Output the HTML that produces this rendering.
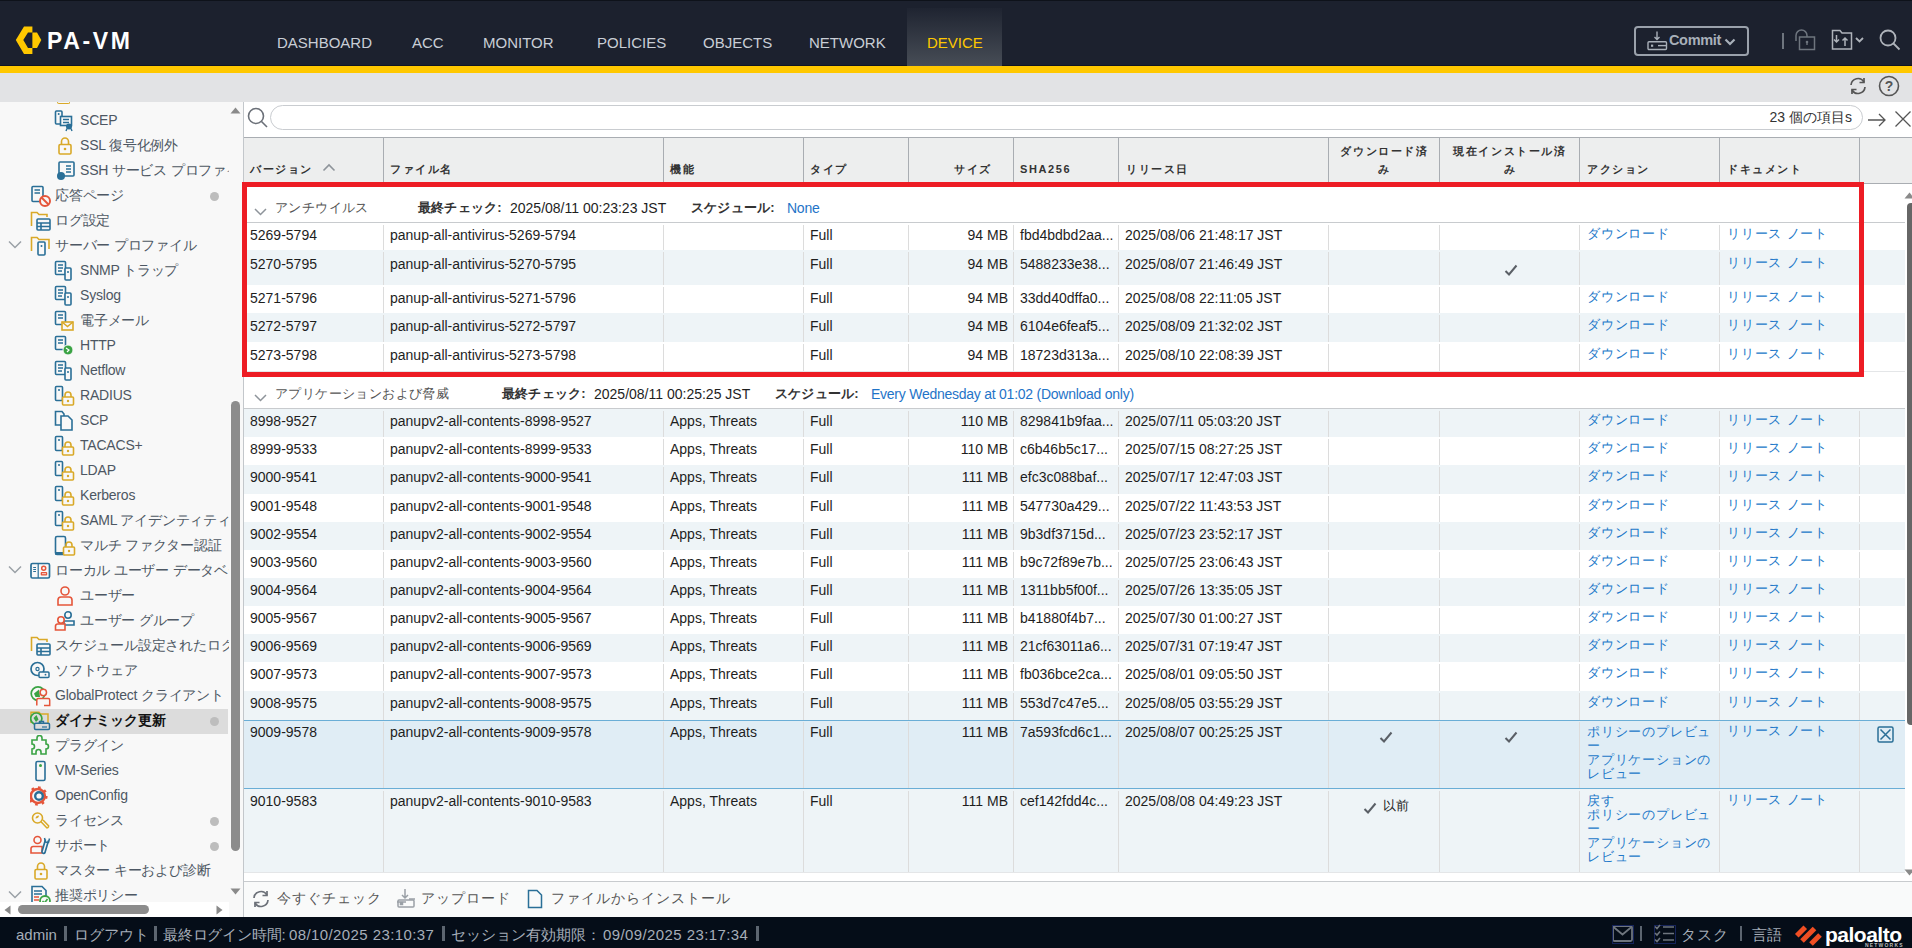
<!DOCTYPE html><html><head><meta charset="utf-8"><title>PA-VM</title><style>
*{box-sizing:border-box;margin:0;padding:0}
html,body{width:1912px;height:948px;overflow:hidden;background:#fff;font-family:"Liberation Sans",sans-serif;position:relative}
.abs{position:absolute}
.t{position:absolute;white-space:nowrap;line-height:1}
#nav{position:absolute;left:0;top:0;width:1912px;height:66px;background:#1c212e;border-top:1px solid #0e121a;border-bottom:1px solid #111622}
.nv{position:absolute;top:35px;font-size:15px;color:#c9d0d8;letter-spacing:0px;line-height:15px;white-space:nowrap}
#ystripe{position:absolute;left:0;top:66px;width:1912px;height:7px;background:#ffc800}
#gbar{position:absolute;left:0;top:73px;width:1912px;height:29px;background:#e2e3e5}
#side{position:absolute;left:0;top:102px;width:243px;height:815px;background:#f8f8f8;overflow:hidden}
.si{position:absolute;height:25px;line-height:25px;font-size:14px;color:#4d5763;white-space:nowrap;letter-spacing:-0.2px}
.dot{position:absolute;width:9px;height:9px;border-radius:50%;background:#bdbdbd}
#main{position:absolute;left:243px;top:102px;width:1669px;height:815px;background:#fff;border-left:1px solid #c3c7cb}
.hd{position:absolute;font-size:11px;font-weight:bold;color:#333;letter-spacing:1.6px;white-space:nowrap;line-height:13px}
.row{position:absolute;left:244px;width:1661px}
.c{position:absolute;font-size:14px;color:#1e1e1e;white-space:nowrap;line-height:16px}
.lk{position:absolute;font-size:13px;color:#2278c9;white-space:nowrap;line-height:14px;letter-spacing:0.8px}
.vl{position:absolute;width:1px;background:#dcdcdc}
#status{position:absolute;left:0;top:917px;width:1912px;height:31px;background:#050d18}
.st{position:absolute;top:926px;font-size:15px;color:#a6aeb9;white-space:nowrap;line-height:18px}
.sep{position:absolute;width:3px;height:15px;background:#5c6570}
</style></head><body>
<div id="nav"></div>
<svg class="abs" style="left:15px;top:25px" width="28" height="30" viewBox="0 0 28 30">
<path d="M9 1.5 L17.4 1.5 L17.4 7.6 L13 7.6 L8.3 15 L13 22.9 L17.4 22.9 L17.4 29 L9 29 L0.8 15 Z" fill="#ffc800"/>
<path d="M17.4 7.6 L22 7.6 L26.3 15 L22 22.9 L17.4 22.9 Z" fill="#ffc800"/>
</svg>
<div class="t" style="left:47px;top:30px;font-size:23px;font-weight:bold;color:#fff;letter-spacing:2.6px;line-height:22px">PA-VM</div>
<div class="abs" style="left:907px;top:8px;width:95px;height:58px;background:linear-gradient(#1f2431,#474d56)"></div>
<div class="nv" style="left:277px;color:#c9ced6">DASHBOARD</div>
<div class="nv" style="left:412px;color:#c9ced6">ACC</div>
<div class="nv" style="left:483px;color:#c9ced6">MONITOR</div>
<div class="nv" style="left:597px;color:#c9ced6">POLICIES</div>
<div class="nv" style="left:703px;color:#c9ced6">OBJECTS</div>
<div class="nv" style="left:809px;color:#c9ced6">NETWORK</div>
<div class="nv" style="left:927px;color:#ffc800">DEVICE</div>
<div class="abs" style="left:1634px;top:26px;width:115px;height:30px;border:2px solid #9aa1ab;border-radius:4px"></div>
<svg class="abs" style="left:1646px;top:30px" width="22" height="22" viewBox="0 0 22 22" fill="none" stroke="#a9b0b9" stroke-width="1.4">
<path d="M11 1.5V9.5M8.5 7L11 9.5L13.5 7"/><rect x="2" y="11.7" width="18.5" height="7.8" rx="1"/><path d="M12 15.6H20.5"/><rect x="5" y="14.6" width="2.2" height="2.2" fill="#a9b0b9" stroke="none"/></svg>
<div class="t" style="left:1669px;top:32px;font-size:14.5px;font-weight:bold;color:#a8b0b9;letter-spacing:-0.35px;line-height:16px">Commit</div>
<svg class="abs" style="left:1724px;top:38px" width="12" height="8" viewBox="0 0 12 8"><path d="M1.5 1.5L6 6L10.5 1.5" stroke="#a8b0b9" stroke-width="2.2" fill="none"/></svg>
<div class="abs" style="left:1782px;top:33px;width:2px;height:16px;background:#6e757e"></div>
<svg class="abs" style="left:1794px;top:29px" width="22" height="22" viewBox="0 0 22 22" fill="none" stroke="#6e757e" stroke-width="1.5">
<path d="M2 12V6.5A5.5 5.5 0 0 1 13 6.5V8"/><rect x="5.5" y="8" width="15" height="12.5"/><circle cx="13" cy="13" r="1.3" fill="#6e757e" stroke="none"/><path d="M13 13V16" stroke-width="1.4"/></svg>
<svg class="abs" style="left:1831px;top:29px" width="34" height="22" viewBox="0 0 34 22" fill="none" stroke="#aeb3ba" stroke-width="1.5">
<path d="M1.5 20 V1.5 H9 L11 4 H20.5 V20 Z"/><path d="M5.5 6 V13 M3 10.5 L5.5 13 L8 10.5 M14 17 V9 M11.5 11.5 L14 9 L16.5 11.5"/><path d="M25 9 L28.5 12.5 L32 9" stroke-width="1.8"/></svg>
<svg class="abs" style="left:1879px;top:29px" width="22" height="22" viewBox="0 0 22 22" fill="none" stroke="#aeb3ba" stroke-width="1.8">
<circle cx="9" cy="9" r="7.5"/><path d="M14.5 14.5 L20.5 20.5"/></svg>
<div id="ystripe"></div><div id="gbar"></div>
<svg class="abs" style="left:1848px;top:76px" width="20" height="20" viewBox="0 0 20 20" fill="none" stroke="#555" stroke-width="1.7">
<path d="M3 9 A7 7 0 0 1 16 6"/><path d="M17 11 A7 7 0 0 1 4 14"/><path d="M16 2 V6.5 H11.5"/><path d="M4 18 V13.5 H8.5"/></svg>
<svg class="abs" style="left:1878px;top:75px" width="22" height="22" viewBox="0 0 22 22"><circle cx="11" cy="11" r="9.5" fill="none" stroke="#555" stroke-width="1.6"/>
<text x="11" y="16" text-anchor="middle" font-family="Liberation Sans" font-size="14" font-weight="bold" fill="#555">?</text></svg>
<div id="side">
<div class="abs" style="left:57px;top:-2px;width:13px;height:4px;border:1.6px solid #d9a928;border-top:none;border-radius:0 0 2px 2px"></div>
<div class="abs" style="left:54px;top:8px"><svg width="22" height="22" viewBox="0 0 22 22" fill="none" stroke-width="1.6"><rect x="1.5" y="1" width="6.5" height="13" rx="1" stroke="#2a6f97"/><circle cx="4.7" cy="4" r="1" fill="#2a6f97"/><rect x="6.5" y="6.5" width="11" height="9" fill="#f8f8f8" stroke="#2a6f97"/><path d="M9 9.5H15M9 12.5H15" stroke="#2a6f97"/><circle cx="15" cy="16.5" r="3" fill="#2a6f97" stroke="none"/><path d="M13 18.5L12 21M17 18.5L18 21" stroke="#2a6f97" stroke-width="1.4"/></svg></div>
<div class="si" style="left:80px;top:6px;">SCEP</div>
<div class="abs" style="left:54px;top:33px"><svg width="22" height="22" viewBox="0 0 22 22" fill="none" stroke-width="1.6"><path d="M7.5 9.5V6.5A3.5 3.5 0 0 1 14.5 6.5V9.5" stroke="#d9a928"/><rect x="5" y="9.5" width="12" height="9.5" rx="1.2" stroke="#d9a928"/><circle cx="11" cy="14" r="1.3" fill="#d9a928" stroke="none"/></svg></div>
<div class="si" style="left:80px;top:31px;">SSL 復号化例外</div>
<div class="abs" style="left:54px;top:58px"><svg width="22" height="22" viewBox="0 0 22 22" fill="none" stroke-width="1.6"><rect x="5" y="2" width="15" height="14" rx="1" stroke="#2a6f97"/><path d="M12 6H17M12 9H17M12 12H17" stroke="#2a6f97"/><circle cx="7" cy="16" r="4" fill="#2a6f97" stroke="none"/></svg></div>
<div class="si" style="left:80px;top:56px;">SSH サービス プロファイル</div>
<div class="abs" style="left:30px;top:83px"><svg width="22" height="22" viewBox="0 0 22 22" fill="none" stroke-width="1.6"><rect x="2" y="1.5" width="11" height="15" rx="1" stroke="#2a6f97"/><path d="M4.5 5H10M4.5 8H10" stroke="#2a6f97"/><circle cx="15" cy="16" r="5" fill="#f8f8f8" stroke="#e5553a" stroke-width="2"/><path d="M11.5 12.5L18.5 19.5" stroke="#e5553a" stroke-width="2"/></svg></div>
<div class="si" style="left:55px;top:81px;">応答ページ</div>
<div class="dot" style="left:210px;top:90px"></div>
<div class="abs" style="left:30px;top:108px"><svg width="22" height="22" viewBox="0 0 22 22" fill="none" stroke-width="1.6"><path d="M1.5 16V2.5H7L9 4.5H17V7" stroke="#d9a928"/><rect x="7" y="9" width="13" height="11" rx="1" fill="#f8f8f8" stroke="#2a6f97"/><path d="M7 13H20M7 16.5H20M11 13V20" stroke="#2a6f97"/></svg></div>
<div class="si" style="left:55px;top:106px;">ログ設定</div>
<div class="abs" style="left:30px;top:133px"><svg width="22" height="22" viewBox="0 0 22 22" fill="none" stroke-width="1.6"><path d="M1.5 16V2.5H7L9 4.5H19V14" stroke="#d9a928"/><rect x="8" y="7" width="7" height="13" rx="1" fill="#f8f8f8" stroke="#2a6f97"/><circle cx="11.5" cy="11" r="1" fill="#2a6f97"/></svg></div>
<svg class="abs" style="left:8px;top:138px" width="14" height="9" viewBox="0 0 14 9"><path d="M1 1.5L7 7.5L13 1.5" stroke="#9aa0a6" stroke-width="1.5" fill="none"/></svg>
<div class="si" style="left:55px;top:131px;">サーバー プロファイル</div>
<div class="abs" style="left:54px;top:158px"><svg width="22" height="22" viewBox="0 0 22 22" fill="none" stroke-width="1.6"><rect x="1.5" y="1.5" width="10" height="13" rx="1" stroke="#2a6f97"/><path d="M4 5H9M4 8H9M4 11H8" stroke="#2a6f97"/><rect x="11" y="8" width="6" height="12" rx="1" fill="#f8f8f8" stroke="#2a6f97"/><circle cx="14" cy="12" r="1" fill="#2a6f97"/></svg></div>
<div class="si" style="left:80px;top:156px;">SNMP トラップ</div>
<div class="abs" style="left:54px;top:183px"><svg width="22" height="22" viewBox="0 0 22 22" fill="none" stroke-width="1.6"><rect x="1.5" y="1.5" width="10" height="13" rx="1" stroke="#2a6f97"/><path d="M4 5H9M4 8H9M4 11H8" stroke="#2a6f97"/><rect x="11" y="8" width="6" height="12" rx="1" fill="#f8f8f8" stroke="#2a6f97"/><circle cx="14" cy="12" r="1" fill="#2a6f97"/></svg></div>
<div class="si" style="left:80px;top:181px;">Syslog</div>
<div class="abs" style="left:54px;top:208px"><svg width="22" height="22" viewBox="0 0 22 22" fill="none" stroke-width="1.6"><rect x="1.5" y="1.5" width="10" height="13" rx="1" stroke="#2a6f97"/><path d="M4 5H9M4 8H9" stroke="#2a6f97"/><rect x="8" y="12" width="11" height="8" fill="#f8f8f8" stroke="#d9a928"/><path d="M8 12L13.5 16.5L19 12" stroke="#d9a928"/></svg></div>
<div class="si" style="left:80px;top:206px;">電子メール</div>
<div class="abs" style="left:54px;top:233px"><svg width="22" height="22" viewBox="0 0 22 22" fill="none" stroke-width="1.6"><rect x="1.5" y="1.5" width="10" height="13" rx="1" stroke="#2a6f97"/><path d="M4 5H9M4 8H9" stroke="#2a6f97"/><circle cx="14" cy="15" r="5" fill="#3aa344" stroke="#f8f8f8" stroke-width="1"/><path d="M12 13L15 15L13 17" stroke="#fff" stroke-width="1.2"/></svg></div>
<div class="si" style="left:80px;top:231px;">HTTP</div>
<div class="abs" style="left:54px;top:258px"><svg width="22" height="22" viewBox="0 0 22 22" fill="none" stroke-width="1.6"><rect x="1.5" y="1.5" width="10" height="13" rx="1" stroke="#2a6f97"/><path d="M4 5H9M4 8H9M4 11H8" stroke="#2a6f97"/><rect x="11" y="8" width="6" height="12" rx="1" fill="#f8f8f8" stroke="#2a6f97"/><circle cx="14" cy="12" r="1" fill="#2a6f97"/></svg></div>
<div class="si" style="left:80px;top:256px;">Netflow</div>
<div class="abs" style="left:54px;top:283px"><svg width="22" height="22" viewBox="0 0 22 22" fill="none" stroke-width="1.6"><rect x="1.5" y="1.5" width="7" height="14" rx="1" stroke="#2a6f97"/><circle cx="5" cy="5" r="1" fill="#2a6f97"/><path d="M11 12V10A3 3 0 0 1 17 10V12" stroke="#d9a928"/><rect x="8.5" y="12" width="11" height="8" rx="1" fill="#f8f8f8" stroke="#d9a928"/><circle cx="14" cy="16" r="1.2" fill="#d9a928"/></svg></div>
<div class="si" style="left:80px;top:281px;">RADIUS</div>
<div class="abs" style="left:54px;top:308px"><svg width="22" height="22" viewBox="0 0 22 22" fill="none" stroke-width="1.6"><path d="M1.5 1.5H8L10 4V15H1.5Z" stroke="#2a6f97"/><path d="M7 6H14L18 10V20H7Z" fill="#f8f8f8" stroke="#2a6f97"/></svg></div>
<div class="si" style="left:80px;top:306px;">SCP</div>
<div class="abs" style="left:54px;top:333px"><svg width="22" height="22" viewBox="0 0 22 22" fill="none" stroke-width="1.6"><rect x="1.5" y="1.5" width="7" height="14" rx="1" stroke="#2a6f97"/><circle cx="5" cy="5" r="1" fill="#2a6f97"/><path d="M11 12V10A3 3 0 0 1 17 10V12" stroke="#d9a928"/><rect x="8.5" y="12" width="11" height="8" rx="1" fill="#f8f8f8" stroke="#d9a928"/><circle cx="14" cy="16" r="1.2" fill="#d9a928"/></svg></div>
<div class="si" style="left:80px;top:331px;">TACACS+</div>
<div class="abs" style="left:54px;top:358px"><svg width="22" height="22" viewBox="0 0 22 22" fill="none" stroke-width="1.6"><rect x="1.5" y="1.5" width="7" height="14" rx="1" stroke="#2a6f97"/><circle cx="5" cy="5" r="1" fill="#2a6f97"/><path d="M11 12V10A3 3 0 0 1 17 10V12" stroke="#d9a928"/><rect x="8.5" y="12" width="11" height="8" rx="1" fill="#f8f8f8" stroke="#d9a928"/><circle cx="14" cy="16" r="1.2" fill="#d9a928"/></svg></div>
<div class="si" style="left:80px;top:356px;">LDAP</div>
<div class="abs" style="left:54px;top:383px"><svg width="22" height="22" viewBox="0 0 22 22" fill="none" stroke-width="1.6"><rect x="1.5" y="1.5" width="7" height="14" rx="1" stroke="#2a6f97"/><circle cx="5" cy="5" r="1" fill="#2a6f97"/><path d="M11 12V10A3 3 0 0 1 17 10V12" stroke="#d9a928"/><rect x="8.5" y="12" width="11" height="8" rx="1" fill="#f8f8f8" stroke="#d9a928"/><circle cx="14" cy="16" r="1.2" fill="#d9a928"/></svg></div>
<div class="si" style="left:80px;top:381px;">Kerberos</div>
<div class="abs" style="left:54px;top:408px"><svg width="22" height="22" viewBox="0 0 22 22" fill="none" stroke-width="1.6"><rect x="1.5" y="1.5" width="7" height="14" rx="1" stroke="#2a6f97"/><circle cx="5" cy="5" r="1" fill="#2a6f97"/><path d="M11 12V10A3 3 0 0 1 17 10V12" stroke="#d9a928"/><rect x="8.5" y="12" width="11" height="8" rx="1" fill="#f8f8f8" stroke="#d9a928"/><circle cx="14" cy="16" r="1.2" fill="#d9a928"/></svg></div>
<div class="si" style="left:80px;top:406px;">SAML アイデンティティ プロバイダ</div>
<div class="abs" style="left:54px;top:433px"><svg width="22" height="22" viewBox="0 0 22 22" fill="none" stroke-width="1.6"><rect x="1.5" y="1.5" width="10" height="18" rx="1.5" stroke="#2a6f97"/><rect x="1.5" y="17" width="10" height="3" fill="#2a6f97"/><path d="M12 12V10A3 3 0 0 1 18 10V12" stroke="#d9a928"/><rect x="9.5" y="12" width="11" height="8" rx="1" fill="#f8f8f8" stroke="#d9a928"/><circle cx="15" cy="16" r="1.2" fill="#d9a928"/></svg></div>
<div class="si" style="left:80px;top:431px;">マルチ ファクター認証</div>
<div class="abs" style="left:30px;top:458px"><svg width="22" height="22" viewBox="0 0 22 22" fill="none" stroke-width="1.6"><rect x="1" y="3.5" width="18.5" height="14.5" rx="1.5" stroke="#2a6f97" stroke-width="1.7"/><path d="M8.2 3.5V18M3.2 7.5H6M3.2 9.5H6M3.2 11.5H6" stroke="#2a6f97" stroke-width="1.2"/><circle cx="13.7" cy="8.3" r="2" stroke="#e5553a" stroke-width="1.5"/><rect x="10.7" y="12" width="6.5" height="3.5" rx="1" fill="#e5553a" stroke="none"/><path d="M12 13.7H16" stroke="#fff" stroke-width="0.8"/></svg></div>
<svg class="abs" style="left:8px;top:463px" width="14" height="9" viewBox="0 0 14 9"><path d="M1 1.5L7 7.5L13 1.5" stroke="#9aa0a6" stroke-width="1.5" fill="none"/></svg>
<div class="si" style="left:55px;top:456px;">ローカル ユーザー データベース</div>
<div class="abs" style="left:54px;top:483px"><svg width="22" height="22" viewBox="0 0 22 22" fill="none" stroke-width="1.6"><circle cx="11" cy="6" r="4" stroke="#e5553a"/><path d="M4 20V15A3 3 0 0 1 7 12H15A3 3 0 0 1 18 15V20Z" stroke="#e5553a"/></svg></div>
<div class="si" style="left:80px;top:481px;">ユーザー</div>
<div class="abs" style="left:54px;top:508px"><svg width="22" height="22" viewBox="0 0 22 22" fill="none" stroke-width="1.6"><circle cx="14" cy="5" r="3.2" stroke="#2a6f97"/><path d="M10 15V11H20V15Z" stroke="#2a6f97"/><circle cx="7" cy="10" r="3.2" fill="#f8f8f8" stroke="#e5553a"/><path d="M1.5 20V16A2 2 0 0 1 3.5 14H11V20Z" fill="#f8f8f8" stroke="#e5553a"/></svg></div>
<div class="si" style="left:80px;top:506px;">ユーザー グループ</div>
<div class="abs" style="left:30px;top:533px"><svg width="22" height="22" viewBox="0 0 22 22" fill="none" stroke-width="1.6"><path d="M1.5 16V2.5H7L9 4.5H17V7" stroke="#d9a928"/><rect x="7" y="9" width="13" height="11" rx="1" fill="#f8f8f8" stroke="#2a6f97"/><path d="M7 13H20M7 16.5H20M11 13V20" stroke="#2a6f97"/></svg></div>
<div class="si" style="left:55px;top:531px;">スケジュール設定されたログのエクスポート</div>
<div class="abs" style="left:30px;top:558px"><svg width="22" height="22" viewBox="0 0 22 22" fill="none" stroke-width="1.6"><circle cx="7.5" cy="9" r="6.5" stroke="#2a6f97" stroke-width="1.7"/><circle cx="7.5" cy="9" r="1.6" stroke="#2a6f97" stroke-width="1.2"/><rect x="9" y="12" width="10" height="5.5" rx="1" fill="#f8f8f8" stroke="#2a6f97" stroke-width="1.5"/><circle cx="15.5" cy="14.7" r="0.9" fill="#2a6f97"/></svg></div>
<div class="si" style="left:55px;top:556px;">ソフトウェア</div>
<div class="abs" style="left:30px;top:583px"><svg width="22" height="22" viewBox="0 0 22 22" fill="none" stroke-width="1.6"><circle cx="8" cy="8.6" r="6.8" stroke="#3aa344" stroke-width="1.7"/><path d="M4 8.5L9 4.5L10 12L5.5 12Z" fill="#3aa344" stroke="none"/><circle cx="13.3" cy="7.5" r="3.2" fill="#f8f8f8" stroke="#e5553a" stroke-width="1.5"/><path d="M6.8 20.5V15A1.4 1.4 0 0 1 8.2 13.6H18.3A1.4 1.4 0 0 1 19.7 15V20.5H14" fill="#f8f8f8" stroke="#e5553a" stroke-width="1.5"/></svg></div>
<div class="si" style="left:55px;top:581px;">GlobalProtect クライアント</div>
<div class="abs" style="left:0;top:607px;width:228px;height:25px;background:#dcdcdc"></div>
<div class="abs" style="left:30px;top:608px"><svg width="22" height="22" viewBox="0 0 22 22" fill="none" stroke-width="1.6"><path d="M1 13V2.3H9L10.5 4H18V13" stroke="#d9a928" stroke-width="1.5"/><circle cx="6.3" cy="8.6" r="5.6" fill="#dcdcdc" stroke="#3aa344" stroke-width="1.7"/><path d="M3.5 8L6.5 5L8.5 9.5L6 12Z" fill="#3aa344" stroke="none"/><path d="M9.5 13V11.5H13.5V13" stroke="#2a6f97" stroke-width="1.4"/><rect x="4.5" y="13.2" width="15" height="6.3" rx="1.2" fill="#dcdcdc" stroke="#2a6f97" stroke-width="1.5"/><path d="M12 17H17" stroke="#2a6f97" stroke-width="1.2"/></svg></div>
<div class="si" style="left:55px;top:606px;font-weight:bold;color:#111">ダイナミック更新</div>
<div class="dot" style="left:210px;top:615px"></div>
<div class="abs" style="left:30px;top:633px"><svg width="22" height="22" viewBox="0 0 22 22" fill="none" stroke-width="1.6"><path d="M7 3A2.5 2.5 0 0 1 12 3V5H16V9A2.5 2.5 0 0 1 16 14V19H11V17A2.5 2.5 0 0 0 6 17V19H2V14A2.5 2.5 0 0 0 2 9V5H7Z" stroke="#3aa344"/></svg></div>
<div class="si" style="left:55px;top:631px;">プラグイン</div>
<div class="abs" style="left:30px;top:658px"><svg width="22" height="22" viewBox="0 0 22 22" fill="none" stroke-width="1.6"><rect x="6" y="1.5" width="9" height="19" rx="1.5" stroke="#2a6f97"/><circle cx="10.5" cy="5.5" r="1.5" fill="#3aa344"/></svg></div>
<div class="si" style="left:55px;top:656px;">VM-Series</div>
<div class="abs" style="left:30px;top:683px"><svg width="22" height="22" viewBox="0 0 22 22" fill="none" stroke-width="1.6"><circle cx="7.8" cy="11" r="7" stroke="#e5553a" stroke-width="2.6"/><circle cx="7.8" cy="11" r="8.6" stroke="#e5553a" stroke-width="2.4" stroke-dasharray="2.6 4.15"/><circle cx="9" cy="11" r="3.8" fill="#f8f8f8" stroke="#2a6f97" stroke-width="2.4"/></svg></div>
<div class="si" style="left:55px;top:681px;">OpenConfig</div>
<div class="abs" style="left:30px;top:708px"><svg width="22" height="22" viewBox="0 0 22 22" fill="none" stroke-width="1.6"><circle cx="7.5" cy="8" r="5" stroke="#d9a928" stroke-width="1.6"/><path d="M5.5 8.5C5.5 6.5 7 5.5 9 5.5C9 7.5 7.5 8.5 5.5 8.5Z" fill="#d9a928"/><path d="M11 11.8L17.2 18.2M13 10L19 16.2" stroke="#d9a928" stroke-width="1.5"/><path d="M17.2 18.2L19 16.2" stroke="#d9a928" stroke-width="1.5"/></svg></div>
<div class="si" style="left:55px;top:706px;">ライセンス</div>
<div class="dot" style="left:210px;top:715px"></div>
<div class="abs" style="left:30px;top:733px"><svg width="22" height="22" viewBox="0 0 22 22" fill="none" stroke-width="1.6"><circle cx="7.5" cy="5" r="3.5" stroke="#e5553a"/><path d="M1 18V13.5A2 2 0 0 1 3 11.5H12V18Z" stroke="#e5553a"/><path d="M18.5 5.5L15 17.5A1.6 1.6 0 0 1 12 16.5L15.5 4.5" fill="#f8f8f8" stroke="#2a6f97" stroke-width="1.7"/><path d="M14.5 3L15.5 7L18.5 7.5L19.5 3.5" stroke="#2a6f97" stroke-width="1.5"/></svg></div>
<div class="si" style="left:55px;top:731px;">サポート</div>
<div class="dot" style="left:210px;top:740px"></div>
<div class="abs" style="left:30px;top:758px"><svg width="22" height="22" viewBox="0 0 22 22" fill="none" stroke-width="1.6"><path d="M7.5 9.5V6.5A3.5 3.5 0 0 1 14.5 6.5V9.5" stroke="#d9a928"/><rect x="5" y="9.5" width="12" height="9.5" rx="1.2" stroke="#d9a928"/><circle cx="11" cy="14" r="1.3" fill="#d9a928" stroke="none"/></svg></div>
<div class="si" style="left:55px;top:756px;">マスター キーおよび診断</div>
<div class="abs" style="left:30px;top:783px"><svg width="22" height="22" viewBox="0 0 22 22" fill="none" stroke-width="1.6"><path d="M2 1.5H12L16 5.5V20H2Z" stroke="#2a6f97"/><path d="M4 6H12M4 9H12" stroke="#2a6f97"/><path d="M4 12H9M4 15H9" stroke="#e5553a"/><circle cx="15" cy="16" r="5" fill="#f8f8f8" stroke="#3aa344" stroke-width="1.8"/><path d="M12.5 16L14.5 18L17.5 14" stroke="#3aa344"/></svg></div>
<svg class="abs" style="left:8px;top:788px" width="14" height="9" viewBox="0 0 14 9"><path d="M1 1.5L7 7.5L13 1.5" stroke="#9aa0a6" stroke-width="1.5" fill="none"/></svg>
<div class="si" style="left:55px;top:781px;">推奨ポリシー</div>
<div class="abs" style="left:229px;top:0;width:14px;height:815px;background:#f8f8f8"></div>
<svg class="abs" style="left:230px;top:5px" width="11" height="7" viewBox="0 0 11 7"><path d="M0.5 6.5L5.5 0.5L10.5 6.5Z" fill="#8a8a8a"/></svg>
<div class="abs" style="left:231px;top:299px;width:9px;height:450px;border-radius:5px;background:#8c8c8c"></div>
<svg class="abs" style="left:230px;top:786px" width="11" height="7" viewBox="0 0 11 7"><path d="M0.5 0.5L5.5 6.5L10.5 0.5Z" fill="#8a8a8a"/></svg>
<div class="abs" style="left:0;top:800px;width:229px;height:15px;background:#fff"></div>
<svg class="abs" style="left:4px;top:803px" width="7" height="10" viewBox="0 0 7 10"><path d="M6.5 0.5L0.5 5L6.5 9.5Z" fill="#8a8a8a"/></svg>
<div class="abs" style="left:18px;top:803px;width:131px;height:9px;border-radius:5px;background:#8c8c8c"></div>
<svg class="abs" style="left:216px;top:803px" width="7" height="10" viewBox="0 0 7 10"><path d="M0.5 0.5L6.5 5L0.5 9.5Z" fill="#8a8a8a"/></svg>
</div>
<div id="main"></div>
<svg class="abs" style="left:244px;top:510px" width="5" height="9" viewBox="0 0 5 9"><path d="M4.5 0.5L0.5 4.5L4.5 8.5Z" fill="#b8b8b8"/></svg>
<svg class="abs" style="left:247px;top:107px" width="22" height="22" viewBox="0 0 22 22" fill="none" stroke="#6b7078" stroke-width="1.6">
<circle cx="9" cy="9" r="7.5"/><path d="M14.5 14.5L20 20"/></svg>
<div class="abs" style="left:270px;top:105px;width:1593px;height:25px;border:1px solid #c9ccd0;border-radius:13px;background:#fff"></div>
<div class="t" style="right:60px;top:110px;font-size:14px;color:#333;line-height:14px">23 個の項目s</div>
<svg class="abs" style="left:1867px;top:112px" width="20" height="16" viewBox="0 0 20 16" fill="none" stroke="#555" stroke-width="1.3"><path d="M1 8H18M12 2L18 8L12 14"/></svg>
<svg class="abs" style="left:1894px;top:110px" width="18" height="18" viewBox="0 0 18 18" fill="none" stroke="#555" stroke-width="1.3"><path d="M1.5 1.5L16.5 16.5M16.5 1.5L1.5 16.5"/></svg>
<div class="abs" style="left:244px;top:137px;width:1668px;height:47px;background:#edeeee;border-top:1px solid #a9adb2;border-bottom:1px solid #a9adb2"></div>
<div class="abs" style="left:383px;top:138px;width:1px;height:45px;background:#a9adb2"></div>
<div class="abs" style="left:663px;top:138px;width:1px;height:45px;background:#a9adb2"></div>
<div class="abs" style="left:803px;top:138px;width:1px;height:45px;background:#a9adb2"></div>
<div class="abs" style="left:908px;top:138px;width:1px;height:45px;background:#a9adb2"></div>
<div class="abs" style="left:1013px;top:138px;width:1px;height:45px;background:#a9adb2"></div>
<div class="abs" style="left:1118px;top:138px;width:1px;height:45px;background:#a9adb2"></div>
<div class="abs" style="left:1328px;top:138px;width:1px;height:45px;background:#a9adb2"></div>
<div class="abs" style="left:1439px;top:138px;width:1px;height:45px;background:#a9adb2"></div>
<div class="abs" style="left:1579px;top:138px;width:1px;height:45px;background:#a9adb2"></div>
<div class="abs" style="left:1719px;top:138px;width:1px;height:45px;background:#a9adb2"></div>
<div class="abs" style="left:1859px;top:138px;width:1px;height:45px;background:#a9adb2"></div>
<div class="hd" style="left:250px;top:163px">バージョン</div>
<div class="hd" style="left:390px;top:163px">ファイル名</div>
<div class="hd" style="left:670px;top:163px">機能</div>
<div class="hd" style="left:810px;top:163px">タイプ</div>
<div class="hd" style="right:920px;top:163px">サイズ</div>
<div class="hd" style="left:1020px;top:163px">SHA256</div>
<div class="hd" style="left:1126px;top:163px">リリース日</div>
<div class="hd" style="left:1587px;top:163px">アクション</div>
<div class="hd" style="left:1727px;top:163px">ドキュメント</div>
<svg class="abs" style="left:322px;top:163px" width="14" height="9" viewBox="0 0 14 9"><path d="M1.5 7.5L7 2L12.5 7.5" stroke="#8e949a" stroke-width="1.6" fill="none"/></svg>
<div class="hd" style="left:1328px;width:111px;text-align:center;top:142px;line-height:18px;white-space:normal;padding-left:2px">ダウンロード済<br>み</div>
<div class="hd" style="left:1439px;width:140px;text-align:center;top:142px;line-height:18px;white-space:normal;padding-left:2px">現在インストール済<br>み</div>
<div class="abs" style="left:244px;top:222px;width:1661px;height:1px;background:#c8cbce"></div>
<svg class="abs" style="left:254px;top:208px" width="13" height="8" viewBox="0 0 13 8"><path d="M1 1L6.5 6.5L12 1" stroke="#8e949a" stroke-width="1.5" fill="none"/></svg>
<div class="t" style="left:275px;top:201px;font-size:13px;color:#555;letter-spacing:0.4px;line-height:14px">アンチウイルス</div>
<div class="t" style="left:418px;top:201px;font-size:13px;font-weight:bold;color:#333;letter-spacing:0.2px;line-height:14px">最終チェック:</div>
<div class="c" style="left:510px;top:200px">2025/08/11 00:23:23 JST</div>
<div class="t" style="left:691px;top:201px;font-size:13px;font-weight:bold;color:#333;letter-spacing:0.2px;line-height:14px">スケジュール:</div>
<div class="c" style="left:787px;top:200px;color:#1f74c8;letter-spacing:-0.25px">None</div>
<div class="abs" style="left:244px;top:223px;width:1661px;height:27px;background:#ffffff"></div>
<div class="abs" style="left:244px;top:250px;width:1661px;height:1px;background:#e4e6e8"></div>
<div class="vl" style="left:383px;top:225px;height:25px"></div>
<div class="vl" style="left:663px;top:225px;height:25px"></div>
<div class="vl" style="left:803px;top:225px;height:25px"></div>
<div class="vl" style="left:908px;top:225px;height:25px"></div>
<div class="vl" style="left:1013px;top:225px;height:25px"></div>
<div class="vl" style="left:1118px;top:225px;height:25px"></div>
<div class="vl" style="left:1328px;top:225px;height:25px"></div>
<div class="vl" style="left:1439px;top:225px;height:25px"></div>
<div class="vl" style="left:1579px;top:225px;height:25px"></div>
<div class="vl" style="left:1719px;top:225px;height:25px"></div>
<div class="vl" style="left:1859px;top:225px;height:25px"></div>
<div class="c" style="left:250px;top:227px">5269-5794</div>
<div class="c" style="left:390px;top:227px">panup-all-antivirus-5269-5794</div>
<div class="c" style="left:810px;top:227px">Full</div>
<div class="c" style="right:904px;top:227px">94 MB</div>
<div class="c" style="left:1020px;top:227px">fbd4bdbd2aa...</div>
<div class="c" style="left:1125px;top:227px">2025/08/06 21:48:17 JST</div>
<div class="lk" style="left:1587px;top:227px">ダウンロード</div>
<div class="lk" style="left:1727px;top:227px">リリース ノート</div>
<div class="abs" style="left:244px;top:250px;width:1661px;height:35px;background:#eef4f7"></div>
<div class="abs" style="left:244px;top:285px;width:1661px;height:1px;background:#e4e6e8"></div>
<div class="vl" style="left:383px;top:252px;height:33px"></div>
<div class="vl" style="left:663px;top:252px;height:33px"></div>
<div class="vl" style="left:803px;top:252px;height:33px"></div>
<div class="vl" style="left:908px;top:252px;height:33px"></div>
<div class="vl" style="left:1013px;top:252px;height:33px"></div>
<div class="vl" style="left:1118px;top:252px;height:33px"></div>
<div class="vl" style="left:1328px;top:252px;height:33px"></div>
<div class="vl" style="left:1439px;top:252px;height:33px"></div>
<div class="vl" style="left:1579px;top:252px;height:33px"></div>
<div class="vl" style="left:1719px;top:252px;height:33px"></div>
<div class="vl" style="left:1859px;top:252px;height:33px"></div>
<div class="c" style="left:250px;top:256px">5270-5795</div>
<div class="c" style="left:390px;top:256px">panup-all-antivirus-5270-5795</div>
<div class="c" style="left:810px;top:256px">Full</div>
<div class="c" style="right:904px;top:256px">94 MB</div>
<div class="c" style="left:1020px;top:256px">5488233e38...</div>
<div class="c" style="left:1125px;top:256px">2025/08/07 21:46:49 JST</div>
<div class="abs" style="left:1504px;top:262px"><svg width="14" height="12" viewBox="0 0 14 12"><path d="M1.5 7L5 10.5L12.5 1.5" stroke="#5a5f66" stroke-width="2" fill="none"/></svg></div>
<div class="lk" style="left:1727px;top:256px">リリース ノート</div>
<div class="abs" style="left:244px;top:285px;width:1661px;height:28px;background:#ffffff"></div>
<div class="abs" style="left:244px;top:313px;width:1661px;height:1px;background:#e4e6e8"></div>
<div class="vl" style="left:383px;top:287px;height:26px"></div>
<div class="vl" style="left:663px;top:287px;height:26px"></div>
<div class="vl" style="left:803px;top:287px;height:26px"></div>
<div class="vl" style="left:908px;top:287px;height:26px"></div>
<div class="vl" style="left:1013px;top:287px;height:26px"></div>
<div class="vl" style="left:1118px;top:287px;height:26px"></div>
<div class="vl" style="left:1328px;top:287px;height:26px"></div>
<div class="vl" style="left:1439px;top:287px;height:26px"></div>
<div class="vl" style="left:1579px;top:287px;height:26px"></div>
<div class="vl" style="left:1719px;top:287px;height:26px"></div>
<div class="vl" style="left:1859px;top:287px;height:26px"></div>
<div class="c" style="left:250px;top:290px">5271-5796</div>
<div class="c" style="left:390px;top:290px">panup-all-antivirus-5271-5796</div>
<div class="c" style="left:810px;top:290px">Full</div>
<div class="c" style="right:904px;top:290px">94 MB</div>
<div class="c" style="left:1020px;top:290px">33dd40dffa0...</div>
<div class="c" style="left:1125px;top:290px">2025/08/08 22:11:05 JST</div>
<div class="lk" style="left:1587px;top:290px">ダウンロード</div>
<div class="lk" style="left:1727px;top:290px">リリース ノート</div>
<div class="abs" style="left:244px;top:313px;width:1661px;height:29px;background:#eef4f7"></div>
<div class="abs" style="left:244px;top:342px;width:1661px;height:1px;background:#e4e6e8"></div>
<div class="vl" style="left:383px;top:315px;height:27px"></div>
<div class="vl" style="left:663px;top:315px;height:27px"></div>
<div class="vl" style="left:803px;top:315px;height:27px"></div>
<div class="vl" style="left:908px;top:315px;height:27px"></div>
<div class="vl" style="left:1013px;top:315px;height:27px"></div>
<div class="vl" style="left:1118px;top:315px;height:27px"></div>
<div class="vl" style="left:1328px;top:315px;height:27px"></div>
<div class="vl" style="left:1439px;top:315px;height:27px"></div>
<div class="vl" style="left:1579px;top:315px;height:27px"></div>
<div class="vl" style="left:1719px;top:315px;height:27px"></div>
<div class="vl" style="left:1859px;top:315px;height:27px"></div>
<div class="c" style="left:250px;top:318px">5272-5797</div>
<div class="c" style="left:390px;top:318px">panup-all-antivirus-5272-5797</div>
<div class="c" style="left:810px;top:318px">Full</div>
<div class="c" style="right:904px;top:318px">94 MB</div>
<div class="c" style="left:1020px;top:318px">6104e6feaf5...</div>
<div class="c" style="left:1125px;top:318px">2025/08/09 21:32:02 JST</div>
<div class="lk" style="left:1587px;top:318px">ダウンロード</div>
<div class="lk" style="left:1727px;top:318px">リリース ノート</div>
<div class="abs" style="left:244px;top:342px;width:1661px;height:29px;background:#ffffff"></div>
<div class="abs" style="left:244px;top:371px;width:1661px;height:1px;background:#e4e6e8"></div>
<div class="vl" style="left:383px;top:344px;height:27px"></div>
<div class="vl" style="left:663px;top:344px;height:27px"></div>
<div class="vl" style="left:803px;top:344px;height:27px"></div>
<div class="vl" style="left:908px;top:344px;height:27px"></div>
<div class="vl" style="left:1013px;top:344px;height:27px"></div>
<div class="vl" style="left:1118px;top:344px;height:27px"></div>
<div class="vl" style="left:1328px;top:344px;height:27px"></div>
<div class="vl" style="left:1439px;top:344px;height:27px"></div>
<div class="vl" style="left:1579px;top:344px;height:27px"></div>
<div class="vl" style="left:1719px;top:344px;height:27px"></div>
<div class="vl" style="left:1859px;top:344px;height:27px"></div>
<div class="c" style="left:250px;top:347px">5273-5798</div>
<div class="c" style="left:390px;top:347px">panup-all-antivirus-5273-5798</div>
<div class="c" style="left:810px;top:347px">Full</div>
<div class="c" style="right:904px;top:347px">94 MB</div>
<div class="c" style="left:1020px;top:347px">18723d313a...</div>
<div class="c" style="left:1125px;top:347px">2025/08/10 22:08:39 JST</div>
<div class="lk" style="left:1587px;top:347px">ダウンロード</div>
<div class="lk" style="left:1727px;top:347px">リリース ノート</div>
<div class="abs" style="left:244px;top:408px;width:1661px;height:1px;background:#c8cbce"></div>
<svg class="abs" style="left:254px;top:394px" width="13" height="8" viewBox="0 0 13 8"><path d="M1 1L6.5 6.5L12 1" stroke="#8e949a" stroke-width="1.5" fill="none"/></svg>
<div class="t" style="left:275px;top:387px;font-size:13px;color:#555;letter-spacing:0.4px;line-height:14px">アプリケーションおよび脅威</div>
<div class="t" style="left:502px;top:387px;font-size:13px;font-weight:bold;color:#333;letter-spacing:0.2px;line-height:14px">最終チェック:</div>
<div class="c" style="left:594px;top:386px">2025/08/11 00:25:25 JST</div>
<div class="t" style="left:775px;top:387px;font-size:13px;font-weight:bold;color:#333;letter-spacing:0.2px;line-height:14px">スケジュール:</div>
<div class="c" style="left:871px;top:386px;color:#1f74c8;letter-spacing:-0.25px">Every Wednesday at 01:02 (Download only)</div>
<div class="abs" style="left:244px;top:409px;width:1661px;height:28px;background:#eef4f7"></div>
<div class="abs" style="left:244px;top:437px;width:1661px;height:1px;background:#e4e6e8"></div>
<div class="vl" style="left:383px;top:411px;height:26px"></div>
<div class="vl" style="left:663px;top:411px;height:26px"></div>
<div class="vl" style="left:803px;top:411px;height:26px"></div>
<div class="vl" style="left:908px;top:411px;height:26px"></div>
<div class="vl" style="left:1013px;top:411px;height:26px"></div>
<div class="vl" style="left:1118px;top:411px;height:26px"></div>
<div class="vl" style="left:1328px;top:411px;height:26px"></div>
<div class="vl" style="left:1439px;top:411px;height:26px"></div>
<div class="vl" style="left:1579px;top:411px;height:26px"></div>
<div class="vl" style="left:1719px;top:411px;height:26px"></div>
<div class="vl" style="left:1859px;top:411px;height:26px"></div>
<div class="c" style="left:250px;top:413px">8998-9527</div>
<div class="c" style="left:390px;top:413px">panupv2-all-contents-8998-9527</div>
<div class="c" style="left:670px;top:413px">Apps, Threats</div>
<div class="c" style="left:810px;top:413px">Full</div>
<div class="c" style="right:904px;top:413px">110 MB</div>
<div class="c" style="left:1020px;top:413px">829841b9faa...</div>
<div class="c" style="left:1125px;top:413px">2025/07/11 05:03:20 JST</div>
<div class="lk" style="left:1587px;top:413px">ダウンロード</div>
<div class="lk" style="left:1727px;top:413px">リリース ノート</div>
<div class="abs" style="left:244px;top:437px;width:1661px;height:28px;background:#ffffff"></div>
<div class="abs" style="left:244px;top:465px;width:1661px;height:1px;background:#e4e6e8"></div>
<div class="vl" style="left:383px;top:439px;height:26px"></div>
<div class="vl" style="left:663px;top:439px;height:26px"></div>
<div class="vl" style="left:803px;top:439px;height:26px"></div>
<div class="vl" style="left:908px;top:439px;height:26px"></div>
<div class="vl" style="left:1013px;top:439px;height:26px"></div>
<div class="vl" style="left:1118px;top:439px;height:26px"></div>
<div class="vl" style="left:1328px;top:439px;height:26px"></div>
<div class="vl" style="left:1439px;top:439px;height:26px"></div>
<div class="vl" style="left:1579px;top:439px;height:26px"></div>
<div class="vl" style="left:1719px;top:439px;height:26px"></div>
<div class="vl" style="left:1859px;top:439px;height:26px"></div>
<div class="c" style="left:250px;top:441px">8999-9533</div>
<div class="c" style="left:390px;top:441px">panupv2-all-contents-8999-9533</div>
<div class="c" style="left:670px;top:441px">Apps, Threats</div>
<div class="c" style="left:810px;top:441px">Full</div>
<div class="c" style="right:904px;top:441px">110 MB</div>
<div class="c" style="left:1020px;top:441px">c6b46b5c17...</div>
<div class="c" style="left:1125px;top:441px">2025/07/15 08:27:25 JST</div>
<div class="lk" style="left:1587px;top:441px">ダウンロード</div>
<div class="lk" style="left:1727px;top:441px">リリース ノート</div>
<div class="abs" style="left:244px;top:465px;width:1661px;height:29px;background:#eef4f7"></div>
<div class="abs" style="left:244px;top:494px;width:1661px;height:1px;background:#e4e6e8"></div>
<div class="vl" style="left:383px;top:467px;height:27px"></div>
<div class="vl" style="left:663px;top:467px;height:27px"></div>
<div class="vl" style="left:803px;top:467px;height:27px"></div>
<div class="vl" style="left:908px;top:467px;height:27px"></div>
<div class="vl" style="left:1013px;top:467px;height:27px"></div>
<div class="vl" style="left:1118px;top:467px;height:27px"></div>
<div class="vl" style="left:1328px;top:467px;height:27px"></div>
<div class="vl" style="left:1439px;top:467px;height:27px"></div>
<div class="vl" style="left:1579px;top:467px;height:27px"></div>
<div class="vl" style="left:1719px;top:467px;height:27px"></div>
<div class="vl" style="left:1859px;top:467px;height:27px"></div>
<div class="c" style="left:250px;top:469px">9000-9541</div>
<div class="c" style="left:390px;top:469px">panupv2-all-contents-9000-9541</div>
<div class="c" style="left:670px;top:469px">Apps, Threats</div>
<div class="c" style="left:810px;top:469px">Full</div>
<div class="c" style="right:904px;top:469px">111 MB</div>
<div class="c" style="left:1020px;top:469px">efc3c088baf...</div>
<div class="c" style="left:1125px;top:469px">2025/07/17 12:47:03 JST</div>
<div class="lk" style="left:1587px;top:469px">ダウンロード</div>
<div class="lk" style="left:1727px;top:469px">リリース ノート</div>
<div class="abs" style="left:244px;top:494px;width:1661px;height:28px;background:#ffffff"></div>
<div class="abs" style="left:244px;top:522px;width:1661px;height:1px;background:#e4e6e8"></div>
<div class="vl" style="left:383px;top:496px;height:26px"></div>
<div class="vl" style="left:663px;top:496px;height:26px"></div>
<div class="vl" style="left:803px;top:496px;height:26px"></div>
<div class="vl" style="left:908px;top:496px;height:26px"></div>
<div class="vl" style="left:1013px;top:496px;height:26px"></div>
<div class="vl" style="left:1118px;top:496px;height:26px"></div>
<div class="vl" style="left:1328px;top:496px;height:26px"></div>
<div class="vl" style="left:1439px;top:496px;height:26px"></div>
<div class="vl" style="left:1579px;top:496px;height:26px"></div>
<div class="vl" style="left:1719px;top:496px;height:26px"></div>
<div class="vl" style="left:1859px;top:496px;height:26px"></div>
<div class="c" style="left:250px;top:498px">9001-9548</div>
<div class="c" style="left:390px;top:498px">panupv2-all-contents-9001-9548</div>
<div class="c" style="left:670px;top:498px">Apps, Threats</div>
<div class="c" style="left:810px;top:498px">Full</div>
<div class="c" style="right:904px;top:498px">111 MB</div>
<div class="c" style="left:1020px;top:498px">547730a429...</div>
<div class="c" style="left:1125px;top:498px">2025/07/22 11:43:53 JST</div>
<div class="lk" style="left:1587px;top:498px">ダウンロード</div>
<div class="lk" style="left:1727px;top:498px">リリース ノート</div>
<div class="abs" style="left:244px;top:522px;width:1661px;height:28px;background:#eef4f7"></div>
<div class="abs" style="left:244px;top:550px;width:1661px;height:1px;background:#e4e6e8"></div>
<div class="vl" style="left:383px;top:524px;height:26px"></div>
<div class="vl" style="left:663px;top:524px;height:26px"></div>
<div class="vl" style="left:803px;top:524px;height:26px"></div>
<div class="vl" style="left:908px;top:524px;height:26px"></div>
<div class="vl" style="left:1013px;top:524px;height:26px"></div>
<div class="vl" style="left:1118px;top:524px;height:26px"></div>
<div class="vl" style="left:1328px;top:524px;height:26px"></div>
<div class="vl" style="left:1439px;top:524px;height:26px"></div>
<div class="vl" style="left:1579px;top:524px;height:26px"></div>
<div class="vl" style="left:1719px;top:524px;height:26px"></div>
<div class="vl" style="left:1859px;top:524px;height:26px"></div>
<div class="c" style="left:250px;top:526px">9002-9554</div>
<div class="c" style="left:390px;top:526px">panupv2-all-contents-9002-9554</div>
<div class="c" style="left:670px;top:526px">Apps, Threats</div>
<div class="c" style="left:810px;top:526px">Full</div>
<div class="c" style="right:904px;top:526px">111 MB</div>
<div class="c" style="left:1020px;top:526px">9b3df3715d...</div>
<div class="c" style="left:1125px;top:526px">2025/07/23 23:52:17 JST</div>
<div class="lk" style="left:1587px;top:526px">ダウンロード</div>
<div class="lk" style="left:1727px;top:526px">リリース ノート</div>
<div class="abs" style="left:244px;top:550px;width:1661px;height:28px;background:#ffffff"></div>
<div class="abs" style="left:244px;top:578px;width:1661px;height:1px;background:#e4e6e8"></div>
<div class="vl" style="left:383px;top:552px;height:26px"></div>
<div class="vl" style="left:663px;top:552px;height:26px"></div>
<div class="vl" style="left:803px;top:552px;height:26px"></div>
<div class="vl" style="left:908px;top:552px;height:26px"></div>
<div class="vl" style="left:1013px;top:552px;height:26px"></div>
<div class="vl" style="left:1118px;top:552px;height:26px"></div>
<div class="vl" style="left:1328px;top:552px;height:26px"></div>
<div class="vl" style="left:1439px;top:552px;height:26px"></div>
<div class="vl" style="left:1579px;top:552px;height:26px"></div>
<div class="vl" style="left:1719px;top:552px;height:26px"></div>
<div class="vl" style="left:1859px;top:552px;height:26px"></div>
<div class="c" style="left:250px;top:554px">9003-9560</div>
<div class="c" style="left:390px;top:554px">panupv2-all-contents-9003-9560</div>
<div class="c" style="left:670px;top:554px">Apps, Threats</div>
<div class="c" style="left:810px;top:554px">Full</div>
<div class="c" style="right:904px;top:554px">111 MB</div>
<div class="c" style="left:1020px;top:554px">b9c72f89e7b...</div>
<div class="c" style="left:1125px;top:554px">2025/07/25 23:06:43 JST</div>
<div class="lk" style="left:1587px;top:554px">ダウンロード</div>
<div class="lk" style="left:1727px;top:554px">リリース ノート</div>
<div class="abs" style="left:244px;top:578px;width:1661px;height:28px;background:#eef4f7"></div>
<div class="abs" style="left:244px;top:606px;width:1661px;height:1px;background:#e4e6e8"></div>
<div class="vl" style="left:383px;top:580px;height:26px"></div>
<div class="vl" style="left:663px;top:580px;height:26px"></div>
<div class="vl" style="left:803px;top:580px;height:26px"></div>
<div class="vl" style="left:908px;top:580px;height:26px"></div>
<div class="vl" style="left:1013px;top:580px;height:26px"></div>
<div class="vl" style="left:1118px;top:580px;height:26px"></div>
<div class="vl" style="left:1328px;top:580px;height:26px"></div>
<div class="vl" style="left:1439px;top:580px;height:26px"></div>
<div class="vl" style="left:1579px;top:580px;height:26px"></div>
<div class="vl" style="left:1719px;top:580px;height:26px"></div>
<div class="vl" style="left:1859px;top:580px;height:26px"></div>
<div class="c" style="left:250px;top:582px">9004-9564</div>
<div class="c" style="left:390px;top:582px">panupv2-all-contents-9004-9564</div>
<div class="c" style="left:670px;top:582px">Apps, Threats</div>
<div class="c" style="left:810px;top:582px">Full</div>
<div class="c" style="right:904px;top:582px">111 MB</div>
<div class="c" style="left:1020px;top:582px">1311bb5f00f...</div>
<div class="c" style="left:1125px;top:582px">2025/07/26 13:35:05 JST</div>
<div class="lk" style="left:1587px;top:582px">ダウンロード</div>
<div class="lk" style="left:1727px;top:582px">リリース ノート</div>
<div class="abs" style="left:244px;top:606px;width:1661px;height:28px;background:#ffffff"></div>
<div class="abs" style="left:244px;top:634px;width:1661px;height:1px;background:#e4e6e8"></div>
<div class="vl" style="left:383px;top:608px;height:26px"></div>
<div class="vl" style="left:663px;top:608px;height:26px"></div>
<div class="vl" style="left:803px;top:608px;height:26px"></div>
<div class="vl" style="left:908px;top:608px;height:26px"></div>
<div class="vl" style="left:1013px;top:608px;height:26px"></div>
<div class="vl" style="left:1118px;top:608px;height:26px"></div>
<div class="vl" style="left:1328px;top:608px;height:26px"></div>
<div class="vl" style="left:1439px;top:608px;height:26px"></div>
<div class="vl" style="left:1579px;top:608px;height:26px"></div>
<div class="vl" style="left:1719px;top:608px;height:26px"></div>
<div class="vl" style="left:1859px;top:608px;height:26px"></div>
<div class="c" style="left:250px;top:610px">9005-9567</div>
<div class="c" style="left:390px;top:610px">panupv2-all-contents-9005-9567</div>
<div class="c" style="left:670px;top:610px">Apps, Threats</div>
<div class="c" style="left:810px;top:610px">Full</div>
<div class="c" style="right:904px;top:610px">111 MB</div>
<div class="c" style="left:1020px;top:610px">b41880f4b7...</div>
<div class="c" style="left:1125px;top:610px">2025/07/30 01:00:27 JST</div>
<div class="lk" style="left:1587px;top:610px">ダウンロード</div>
<div class="lk" style="left:1727px;top:610px">リリース ノート</div>
<div class="abs" style="left:244px;top:634px;width:1661px;height:28px;background:#eef4f7"></div>
<div class="abs" style="left:244px;top:662px;width:1661px;height:1px;background:#e4e6e8"></div>
<div class="vl" style="left:383px;top:636px;height:26px"></div>
<div class="vl" style="left:663px;top:636px;height:26px"></div>
<div class="vl" style="left:803px;top:636px;height:26px"></div>
<div class="vl" style="left:908px;top:636px;height:26px"></div>
<div class="vl" style="left:1013px;top:636px;height:26px"></div>
<div class="vl" style="left:1118px;top:636px;height:26px"></div>
<div class="vl" style="left:1328px;top:636px;height:26px"></div>
<div class="vl" style="left:1439px;top:636px;height:26px"></div>
<div class="vl" style="left:1579px;top:636px;height:26px"></div>
<div class="vl" style="left:1719px;top:636px;height:26px"></div>
<div class="vl" style="left:1859px;top:636px;height:26px"></div>
<div class="c" style="left:250px;top:638px">9006-9569</div>
<div class="c" style="left:390px;top:638px">panupv2-all-contents-9006-9569</div>
<div class="c" style="left:670px;top:638px">Apps, Threats</div>
<div class="c" style="left:810px;top:638px">Full</div>
<div class="c" style="right:904px;top:638px">111 MB</div>
<div class="c" style="left:1020px;top:638px">21cf63011a6...</div>
<div class="c" style="left:1125px;top:638px">2025/07/31 07:19:47 JST</div>
<div class="lk" style="left:1587px;top:638px">ダウンロード</div>
<div class="lk" style="left:1727px;top:638px">リリース ノート</div>
<div class="abs" style="left:244px;top:662px;width:1661px;height:29px;background:#ffffff"></div>
<div class="abs" style="left:244px;top:691px;width:1661px;height:1px;background:#e4e6e8"></div>
<div class="vl" style="left:383px;top:664px;height:27px"></div>
<div class="vl" style="left:663px;top:664px;height:27px"></div>
<div class="vl" style="left:803px;top:664px;height:27px"></div>
<div class="vl" style="left:908px;top:664px;height:27px"></div>
<div class="vl" style="left:1013px;top:664px;height:27px"></div>
<div class="vl" style="left:1118px;top:664px;height:27px"></div>
<div class="vl" style="left:1328px;top:664px;height:27px"></div>
<div class="vl" style="left:1439px;top:664px;height:27px"></div>
<div class="vl" style="left:1579px;top:664px;height:27px"></div>
<div class="vl" style="left:1719px;top:664px;height:27px"></div>
<div class="vl" style="left:1859px;top:664px;height:27px"></div>
<div class="c" style="left:250px;top:666px">9007-9573</div>
<div class="c" style="left:390px;top:666px">panupv2-all-contents-9007-9573</div>
<div class="c" style="left:670px;top:666px">Apps, Threats</div>
<div class="c" style="left:810px;top:666px">Full</div>
<div class="c" style="right:904px;top:666px">111 MB</div>
<div class="c" style="left:1020px;top:666px">fb036bce2ca...</div>
<div class="c" style="left:1125px;top:666px">2025/08/01 09:05:50 JST</div>
<div class="lk" style="left:1587px;top:666px">ダウンロード</div>
<div class="lk" style="left:1727px;top:666px">リリース ノート</div>
<div class="abs" style="left:244px;top:691px;width:1661px;height:29px;background:#eef4f7"></div>
<div class="abs" style="left:244px;top:720px;width:1661px;height:1px;background:#e4e6e8"></div>
<div class="vl" style="left:383px;top:693px;height:27px"></div>
<div class="vl" style="left:663px;top:693px;height:27px"></div>
<div class="vl" style="left:803px;top:693px;height:27px"></div>
<div class="vl" style="left:908px;top:693px;height:27px"></div>
<div class="vl" style="left:1013px;top:693px;height:27px"></div>
<div class="vl" style="left:1118px;top:693px;height:27px"></div>
<div class="vl" style="left:1328px;top:693px;height:27px"></div>
<div class="vl" style="left:1439px;top:693px;height:27px"></div>
<div class="vl" style="left:1579px;top:693px;height:27px"></div>
<div class="vl" style="left:1719px;top:693px;height:27px"></div>
<div class="vl" style="left:1859px;top:693px;height:27px"></div>
<div class="c" style="left:250px;top:695px">9008-9575</div>
<div class="c" style="left:390px;top:695px">panupv2-all-contents-9008-9575</div>
<div class="c" style="left:670px;top:695px">Apps, Threats</div>
<div class="c" style="left:810px;top:695px">Full</div>
<div class="c" style="right:904px;top:695px">111 MB</div>
<div class="c" style="left:1020px;top:695px">553d7c47e5...</div>
<div class="c" style="left:1125px;top:695px">2025/08/05 03:55:29 JST</div>
<div class="lk" style="left:1587px;top:695px">ダウンロード</div>
<div class="lk" style="left:1727px;top:695px">リリース ノート</div>
<div class="abs" style="left:244px;top:720px;width:1661px;height:68px;background:#e0edf5"></div>
<div class="abs" style="left:244px;top:720px;width:1661px;height:1px;background:#6aaed6"></div>
<div class="abs" style="left:244px;top:788px;width:1661px;height:1px;background:#6aaed6"></div>
<div class="vl" style="left:383px;top:722px;height:66px"></div>
<div class="vl" style="left:663px;top:722px;height:66px"></div>
<div class="vl" style="left:803px;top:722px;height:66px"></div>
<div class="vl" style="left:908px;top:722px;height:66px"></div>
<div class="vl" style="left:1013px;top:722px;height:66px"></div>
<div class="vl" style="left:1118px;top:722px;height:66px"></div>
<div class="vl" style="left:1328px;top:722px;height:66px"></div>
<div class="vl" style="left:1439px;top:722px;height:66px"></div>
<div class="vl" style="left:1579px;top:722px;height:66px"></div>
<div class="vl" style="left:1719px;top:722px;height:66px"></div>
<div class="vl" style="left:1859px;top:722px;height:66px"></div>
<div class="c" style="left:250px;top:724px">9009-9578</div>
<div class="c" style="left:390px;top:724px">panupv2-all-contents-9009-9578</div>
<div class="c" style="left:670px;top:724px">Apps, Threats</div>
<div class="c" style="left:810px;top:724px">Full</div>
<div class="c" style="right:904px;top:724px">111 MB</div>
<div class="c" style="left:1020px;top:724px">7a593fcd6c1...</div>
<div class="c" style="left:1125px;top:724px">2025/08/07 00:25:25 JST</div>
<div class="abs" style="left:1379px;top:729px"><svg width="14" height="12" viewBox="0 0 14 12"><path d="M1.5 7L5 10.5L12.5 1.5" stroke="#5a5f66" stroke-width="2" fill="none"/></svg></div>
<div class="abs" style="left:1504px;top:729px"><svg width="14" height="12" viewBox="0 0 14 12"><path d="M1.5 7L5 10.5L12.5 1.5" stroke="#5a5f66" stroke-width="2" fill="none"/></svg></div>
<div class="lk" style="left:1587px;top:725px;line-height:14px;white-space:normal;width:128px">ポリシーのプレビュー<br>アプリケーションの<br>レビュー</div>
<div class="lk" style="left:1727px;top:724px">リリース ノート</div>
<svg class="abs" style="left:1877px;top:726px" width="17" height="17" viewBox="0 0 17 17" fill="none" stroke="#2a6f97" stroke-width="1.5"><rect x="1" y="1" width="15" height="15" rx="1.5"/><path d="M3.5 3.5L13.5 13.5M13.5 3.5L3.5 13.5"/></svg>
<div class="abs" style="left:244px;top:789px;width:1661px;height:83px;background:#eef4f7"></div>
<div class="abs" style="left:244px;top:872px;width:1661px;height:1px;background:#e4e6e8"></div>
<div class="vl" style="left:383px;top:791px;height:81px"></div>
<div class="vl" style="left:663px;top:791px;height:81px"></div>
<div class="vl" style="left:803px;top:791px;height:81px"></div>
<div class="vl" style="left:908px;top:791px;height:81px"></div>
<div class="vl" style="left:1013px;top:791px;height:81px"></div>
<div class="vl" style="left:1118px;top:791px;height:81px"></div>
<div class="vl" style="left:1328px;top:791px;height:81px"></div>
<div class="vl" style="left:1439px;top:791px;height:81px"></div>
<div class="vl" style="left:1579px;top:791px;height:81px"></div>
<div class="vl" style="left:1719px;top:791px;height:81px"></div>
<div class="vl" style="left:1859px;top:791px;height:81px"></div>
<div class="c" style="left:250px;top:793px">9010-9583</div>
<div class="c" style="left:390px;top:793px">panupv2-all-contents-9010-9583</div>
<div class="c" style="left:670px;top:793px">Apps, Threats</div>
<div class="c" style="left:810px;top:793px">Full</div>
<div class="c" style="right:904px;top:793px">111 MB</div>
<div class="c" style="left:1020px;top:793px">cef142fdd4c...</div>
<div class="c" style="left:1125px;top:793px">2025/08/08 04:49:23 JST</div>
<div class="abs" style="left:1363px;top:800px"><svg width="14" height="12" viewBox="0 0 14 12"><path d="M1.5 7L5 10.5L12.5 1.5" stroke="#5a5f66" stroke-width="2" fill="none"/></svg></div>
<div class="c" style="left:1383px;top:798px;font-size:13px">以前</div>
<div class="lk" style="left:1587px;top:794px;line-height:14px;white-space:normal;width:128px">戻す<br>ポリシーのプレビュー<br>アプリケーションの<br>レビュー</div>
<div class="lk" style="left:1727px;top:793px">リリース ノート</div>
<div class="abs" style="left:242px;top:182px;width:1622px;height:195px;border:5px solid #ed1c24"></div>
<svg class="abs" style="left:1904px;top:192px" width="11" height="7" viewBox="0 0 11 7"><path d="M0.5 6.5L5.5 0.5L10.5 6.5Z" fill="#8a8a8a"/></svg>
<div class="abs" style="left:1907px;top:203px;width:9px;height:522px;border-radius:4px;background:#666"></div>
<svg class="abs" style="left:1904px;top:869px" width="11" height="7" viewBox="0 0 11 7"><path d="M0.5 0.5L10.5 0.5L5.5 6.5Z" fill="#8a8a8a"/></svg>
<div class="abs" style="left:244px;top:881px;width:1668px;height:1px;background:#c8cbce"></div>
<div class="abs" style="left:244px;top:882px;width:1668px;height:35px;background:#f9fafa"></div>
<svg class="abs" style="left:251px;top:889px" width="20" height="20" viewBox="0 0 20 20" fill="none" stroke="#6b7078" stroke-width="1.7">
<path d="M3 9 A7 7 0 0 1 16 6"/><path d="M17 11 A7 7 0 0 1 4 14"/><path d="M16 2 V6.5 H11.5"/><path d="M4 18 V13.5 H8.5"/></svg>
<div class="t" style="left:277px;top:891px;font-size:14px;color:#555;letter-spacing:1px;line-height:15px">今すぐチェック</div>
<svg class="abs" style="left:396px;top:888px" width="20" height="20" viewBox="0 0 20 20" fill="none" stroke="#9aa0a6" stroke-width="1.5">
<path d="M9 1V10M6 7L9 10L12 7"/><rect x="2" y="12" width="16" height="7" rx="1"/><path d="M1 14H10M13 11H19"/><rect x="4.5" y="14.5" width="2" height="2" fill="#9aa0a6"/></svg>
<div class="t" style="left:421px;top:891px;font-size:14px;color:#555;letter-spacing:1px;line-height:15px">アップロード</div>
<svg class="abs" style="left:527px;top:889px" width="16" height="20" viewBox="0 0 16 20" fill="none" stroke="#2a6f97" stroke-width="1.5">
<path d="M1.5 1.5H10L14.5 6V18.5H1.5Z"/></svg>
<div class="t" style="left:551px;top:891px;font-size:14px;color:#555;letter-spacing:1px;line-height:15px">ファイルからインストール</div>
<div id="status"></div>
<div class="st" style="left:16px">admin</div>
<div class="sep" style="left:64px;top:926px"></div>
<div class="st" style="left:74px;letter-spacing:0px">ログアウト</div>
<div class="sep" style="left:154px;top:926px"></div>
<div class="st" style="left:163px;letter-spacing:-0.2px">最終ログイン時間:</div>
<div class="st" style="left:289px;letter-spacing:0.4px">08/10/2025 23:10:37</div>
<div class="sep" style="left:442px;top:926px"></div>
<div class="st" style="left:451px;letter-spacing:0px">セッション有効期限：</div>
<div class="st" style="left:603px;letter-spacing:0.4px">09/09/2025 23:17:34</div>
<div class="sep" style="left:756px;top:926px"></div>
<svg class="abs" style="left:1612px;top:925px" width="22" height="17" viewBox="0 0 22 17" fill="none" stroke="#6e757e" stroke-width="1.8"><rect x="1" y="1" width="19" height="15" rx="1.5"/><path d="M1.5 2L10.5 9.5L19.5 2"/></svg>
<div class="sep" style="left:1640px;top:926px;width:2px"></div>
<div class="abs" style="left:1612px;top:925px;width:22px;height:19px;border:1px solid #15235a"></div>
<div class="abs" style="left:1654px;top:925px;width:22px;height:19px;border:1px solid #15235a"></div>
<svg class="abs" style="left:1654px;top:924px" width="22" height="19" viewBox="0 0 22 19" fill="none" stroke="#6e757e" stroke-width="1.6"><path d="M1 2.5L3 4.5L6 1M1 9L3 11L6 7.5M1 15.5L3 17.5L6 14M9 3H20M9 9.5H20M9 16H20"/></svg>
<div class="st" style="left:1681px;letter-spacing:1px">タスク</div>
<div class="sep" style="left:1740px;top:926px;width:2px"></div>
<div class="st" style="left:1752px">言語</div>
<svg class="abs" style="left:1790px;top:920px" width="36" height="28" viewBox="0 0 36 28"><g fill="#f04e23">
<path d="M4.95 13.95L13.45 5.45L17.05 9.05L8.55 17.55Z"/><path d="M10.2 19.2L22.7 6.7L26.3 10.3L13.8 22.8Z"/><path d="M19.2 22.2L28.2 13.2L31.8 16.8L22.8 25.8Z"/></g></svg>
<div class="t" style="left:1825px;top:924px;font-size:21px;font-weight:bold;color:#fff;letter-spacing:-0.5px;line-height:21px">paloalto</div>
<div class="t" style="left:1865px;top:943px;font-size:5px;font-weight:bold;color:#bbb;letter-spacing:1.2px;line-height:5px">NETWORKS</div>
</body></html>
